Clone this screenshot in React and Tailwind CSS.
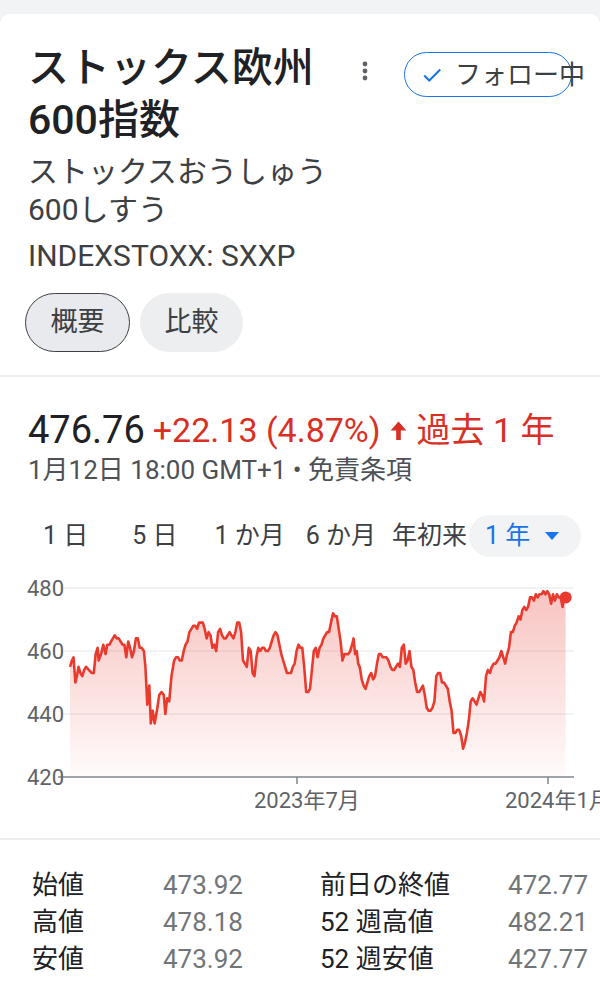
import React from "react";

// chart samples: [x in 2.613 scale, index value]
const SERIES = [
  [183, 455], [188, 457], [192, 458], [197, 450], [201, 452], [205, 455], [210, 453], [215, 452], [220, 454], [225, 455],
  [232, 454], [240, 453], [245, 453], [250, 459], [255, 461], [258, 457], [264, 459], [270, 462], [276, 459], [280, 462],
  [286, 462], [290, 463], [295, 464], [300, 465], [305, 464], [310, 464], [315, 463], [320, 462], [325, 462], [330, 458],
  [335, 463], [340, 461], [345, 458], [350, 460], [355, 464], [360, 464], [365, 461], [370, 461], [376, 460], [380, 455],
  [385, 443], [390, 449], [394, 437], [399, 441], [404, 437], [410, 441], [416, 446], [422, 447], [428, 446], [432, 440],
  [437, 445], [442, 444], [448, 452], [455, 457], [460, 458], [465, 458], [470, 457], [475, 457], [480, 460], [485, 462],
  [490, 463], [495, 466], [500, 467], [505, 468], [510, 468], [515, 467], [520, 469], [525, 469], [530, 469], [535, 467],
  [540, 464], [545, 466], [550, 465], [555, 461], [560, 462], [565, 460], [570, 466], [575, 467], [580, 465], [585, 464],
  [590, 464], [595, 465], [600, 466], [605, 465], [610, 464], [615, 466], [620, 469], [625, 469], [630, 466], [635, 457],
  [640, 456], [645, 455], [650, 461], [655, 460], [660, 453], [665, 452], [670, 458], [675, 461], [680, 460], [685, 461],
  [690, 461], [695, 460], [700, 460], [705, 461], [710, 463], [715, 465], [720, 466], [725, 465], [730, 462], [735, 459],
  [740, 457], [745, 455], [750, 453], [755, 453], [760, 453], [765, 455], [770, 456], [775, 460], [780, 462], [785, 461],
  [790, 461], [795, 455], [800, 447], [805, 447], [810, 448], [815, 454], [820, 460], [825, 461], [830, 458], [835, 461],
  [840, 462], [845, 464], [850, 465], [855, 466], [860, 466], [865, 469], [870, 472], [875, 471], [880, 471], [885, 467],
  [890, 463], [895, 457], [900, 459], [905, 459], [910, 459], [915, 460], [920, 462], [924, 464], [928, 459], [932, 460],
  [936, 456], [940, 455], [945, 451], [950, 449], [955, 448], [960, 450], [965, 452], [970, 453], [975, 451], [980, 452],
  [985, 456], [990, 459], [995, 459], [1000, 458], [1005, 458], [1010, 458], [1015, 457], [1020, 455], [1025, 454], [1030, 454],
  [1035, 455], [1040, 456], [1045, 455], [1050, 461], [1055, 462], [1060, 456], [1065, 457], [1070, 460], [1075, 455], [1080, 454],
  [1085, 450], [1090, 447], [1095, 447], [1100, 448], [1105, 449], [1110, 446], [1115, 442], [1120, 441], [1125, 441], [1130, 442],
  [1135, 444], [1140, 452], [1145, 453], [1150, 453], [1155, 450], [1160, 450], [1165, 449], [1170, 448], [1175, 444], [1180, 441],
  [1185, 434], [1190, 434], [1195, 435], [1200, 435], [1205, 433], [1210, 429], [1215, 431], [1220, 434], [1225, 438], [1230, 444],
  [1235, 445], [1240, 444], [1245, 443], [1250, 445], [1255, 447], [1260, 446], [1265, 444], [1270, 452], [1275, 454], [1280, 453],
  [1285, 455], [1290, 456], [1295, 456], [1300, 457], [1305, 458], [1310, 460], [1315, 458], [1320, 456], [1325, 459], [1330, 461],
  [1335, 466], [1340, 466], [1345, 468], [1350, 469], [1355, 471], [1360, 470], [1365, 473], [1370, 474], [1375, 473], [1380, 474],
  [1385, 477], [1390, 477], [1395, 476], [1400, 478], [1405, 477], [1410, 478], [1415, 478], [1420, 479], [1425, 478], [1430, 479],
  [1435, 478], [1440, 475], [1445, 478], [1450, 476], [1455, 478], [1460, 477], [1465, 477], [1470, 474], [1474, 478], [1478, 477],
];

const pts = SERIES.map(([zx, v]) => [zx / 2.613, 18 + (480 - v) * 3.15]);
const LINE = pts.map((p, i) => `${i ? "L" : "M"}${p[0].toFixed(1)} ${p[1].toFixed(1)}`).join(" ");
const last = pts[pts.length - 1];
const AREA = `${LINE} L${last[0].toFixed(1)} 207 L${pts[0][0].toFixed(1)} 207 Z`;

const TABS = [
  { label: "1 日", ml: "ml-0" },
  { label: "5 日", ml: "ml-[44px]" },
  { label: "1 か月", ml: "ml-[37px]" },
  { label: "6 か月", ml: "ml-[21px]" },
  { label: "年初来", ml: "ml-[16px]" },
];

const STATS = [
  ["始値", "473.92", "前日の終値", "472.77"],
  ["高値", "478.18", "52 週高値", "482.21"],
  ["安値", "473.92", "52 週安値", "427.77"],
];

function PriceChart() {
  return (
    <svg width="600" height="245" viewBox="0 0 600 245" className="block">
      <defs>
        <linearGradient id="fill" x1="0" y1="0" x2="0" y2="1">
          <stop offset="0%" stopColor="#e8453c" stopOpacity="0.32" />
          <stop offset="100%" stopColor="#e8453c" stopOpacity="0.02" />
        </linearGradient>
      </defs>
      {[18, 81, 144].map(y => (
        <line key={y} x1="62" x2="574" y1={y} y2={y} stroke="#eceef0" strokeWidth="1.5" />
      ))}
      <path d={AREA} fill="url(#fill)" />
      <line x1="58" x2="574" y1="207" y2="207" stroke="#80868b" strokeWidth="1.5" />
      <line x1="297" x2="297" y1="207" y2="214" stroke="#80868b" strokeWidth="1.5" />
      <line x1="548" x2="548" y1="207" y2="214" stroke="#80868b" strokeWidth="1.5" />
      <path d={LINE} fill="none" stroke="#ea3a2e" strokeWidth="2.6" strokeLinejoin="round" />
      <circle cx={last[0]} cy={last[1]} r="6" fill="#ea3a2e" />
      <g fill="#5f6368" fontSize="22">
        <text x="27" y="18" dominantBaseline="central">480</text>
        <text x="27" y="81" dominantBaseline="central">460</text>
        <text x="27" y="144" dominantBaseline="central">440</text>
        <text x="27" y="207" dominantBaseline="central">420</text>
        <text x="254" y="230" dominantBaseline="central">2023年7月</text>
        <text x="505" y="230" dominantBaseline="central">2024年1月</text>
      </g>
    </svg>
  );
}

export default function App() {
  return (
    <div className="w-[600px] h-[996px] overflow-hidden bg-[#f1f3f4] pt-[14px] font-[Roboto,'Noto_Sans_CJK_JP',sans-serif]">
      <div className="bg-white h-full rounded-t-[10px]">
        {/* Header */}
        <div className="px-[28px] pt-[28px]">
          <div className="flex items-start">
            <h1 className="w-[322px] text-[41px] leading-[52px] font-medium text-[#202124]">
              ストックス欧州<br />600指数
            </h1>
            <div className="w-[30px] mt-[19px] flex justify-center">
              <svg width="6" height="20" viewBox="0 0 6 20">
                <circle cx="3" cy="3" r="2.4" fill="#5f6368" />
                <circle cx="3" cy="10" r="2.4" fill="#5f6368" />
                <circle cx="3" cy="17" r="2.4" fill="#5f6368" />
              </svg>
            </div>
            <button className="ml-[24px] mt-[10px] h-[45px] w-[168px] shrink-0 rounded-full border-[1.5px] border-[#1a73e8] flex items-center pl-[16px] whitespace-nowrap overflow-visible">
              <svg className="shrink-0" width="22" height="22" viewBox="0 0 24 24" fill="none">
                <path d="M3.5 12.5l5.5 5.5L21 6" stroke="#1a73e8" strokeWidth="2.2" />
              </svg>
              <span className="ml-[12px] shrink-0 text-[26px] leading-none text-[#3c4043]">フォロー中</span>
            </button>
          </div>
          <p className="mt-[7px] text-[30px] leading-[38px] text-[#3c4043]">
            ストックスおうしゅう<br />600しすう
          </p>
          <p className="mt-[10px] text-[30px] leading-[34px] text-[#3c4043]">INDEXSTOXX: SXXP</p>
          <div className="mt-[20px] flex gap-[10px] -ml-[3px]">
            <span className="h-[59px] w-[105px] rounded-full border-[1.5px] border-[#3c4043] bg-[#e8eaed] flex items-center justify-center text-[27px] text-[#3c4043]">概要</span>
            <span className="h-[59px] w-[103px] rounded-full bg-[#eceef0] flex items-center justify-center text-[27px] text-[#3c4043]">比較</span>
          </div>
        </div>

        <div className="mt-[23px] h-[2px] bg-[#ebedef]" />

        {/* Price */}
        <div className="px-[28px] pt-[29px]">
          <div className="flex items-center h-[48px] whitespace-nowrap">
            <span className="text-[38px] text-[#202124]">476.76</span>
            <span className="ml-[8px] text-[34px] text-[#d93025]">+22.13 (4.87%)</span>
            <svg className="ml-[9px] shrink-0" width="17" height="19" viewBox="0 0 16 18">
              <path d="M8 0.5L15.5 9H10.2V18H5.8V9H0.5Z" fill="#d93025" />
            </svg>
            <span className="ml-[10px] text-[34px] text-[#d93025]">過去 1 年</span>
          </div>
          <p className="h-[32px] flex items-center text-[26px] text-[#4d5156] whitespace-nowrap">1月12日 18:00 GMT+1 • 免責条項</p>
        </div>

        {/* Range tabs */}
        <div className="mt-[29px] flex items-center pl-[43px] text-[25px] text-[#3c4043] whitespace-nowrap">
          {TABS.map(t => (
            <span key={t.label} className={t.ml}>{t.label}</span>
          ))}
          <span className="ml-[2px] h-[42px] w-[112px] rounded-full bg-[#f1f3f4] flex items-center pl-[16px]">
            <span className="text-[#1a73e8]">1 年</span>
            <svg className="ml-[15px]" width="14" height="8" viewBox="0 0 14 8">
              <path d="M0 0h14L7 8z" fill="#1a73e8" />
            </svg>
          </span>
        </div>

        {/* Chart */}
        <div className="mt-[13px]">
          <PriceChart />
        </div>

        <div className="mt-[23px] h-[2px] bg-[#ebedef]" />

        {/* Stats */}
        <div className="pt-[27px] text-[26px]">
          {STATS.map(r => (
            <div key={r[0]} className="flex h-[37px] items-center whitespace-nowrap">
              <span className="ml-[32px] w-[131px] text-[#202124]">{r[0]}</span>
              <span className="w-[157px] text-[#70757a]">{r[1]}</span>
              <span className="w-[188px] text-[#202124]">{r[2]}</span>
              <span className="w-[80px] text-right text-[#70757a]">{r[3]}</span>
            </div>
          ))}
        </div>
      </div>
    </div>
  );
}
